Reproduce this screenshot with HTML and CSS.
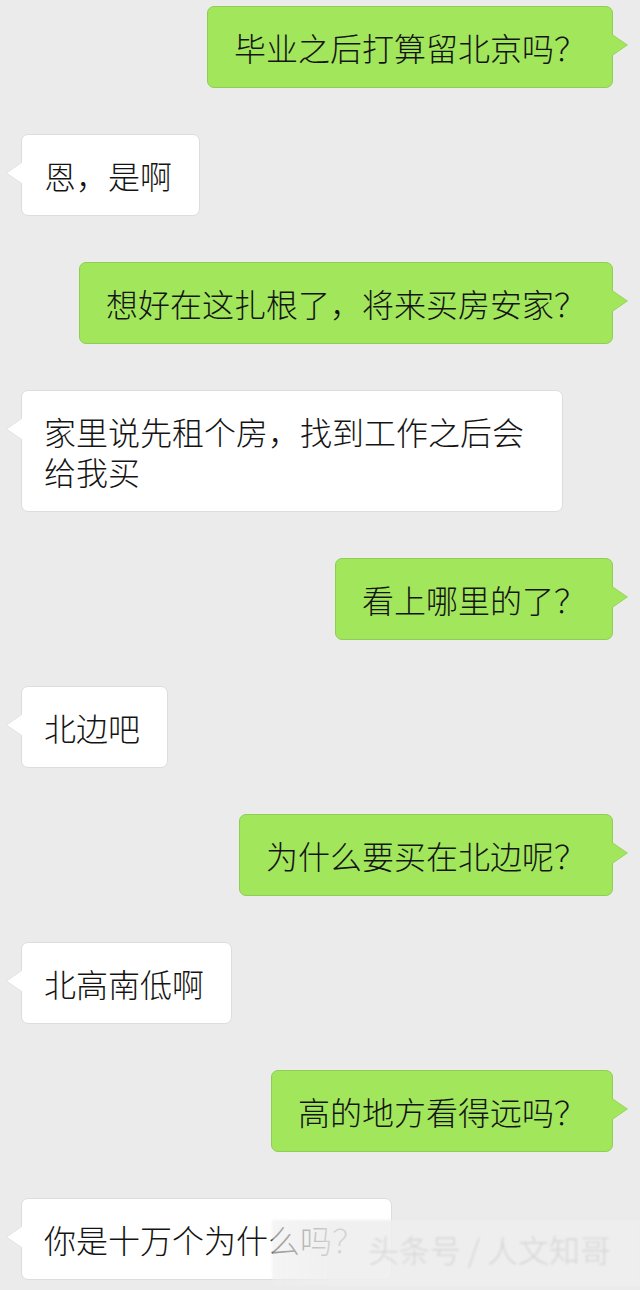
FILE: index.html
```html
<!DOCTYPE html>
<html lang="zh-CN">
<head>
<meta charset="utf-8">
<title>聊天记录</title>
<link rel="stylesheet" href="styles.css">
</head>
<body>
<main class="chat">
  <div class="row me"><div class="bubble green">毕业之后打算留北京吗？</div></div>
  <div class="row other"><div class="bubble white">恩，是啊</div></div>
  <div class="row me"><div class="bubble green">想好在这扎根了，将来买房安家？</div></div>
  <div class="row other"><div class="bubble white">家里说先租个房，找到工作之后会给我买</div></div>
  <div class="row me"><div class="bubble green">看上哪里的了？</div></div>
  <div class="row other"><div class="bubble white">北边吧</div></div>
  <div class="row me"><div class="bubble green">为什么要买在北边呢？</div></div>
  <div class="row other"><div class="bubble white">北高南低啊</div></div>
  <div class="row me"><div class="bubble green">高的地方看得远吗？</div></div>
  <div class="row other last">
    <div class="bubble white">你是十万个为什么吗？</div>
    <div class="watermark">头条号 / 人文知哥</div>
  </div>
</main>
</body>
</html>
```

FILE: styles.css
```css
html, body {
  margin: 0;
  padding: 0;
  background: #ebebeb;
}

body {
  width: 640px;
  height: 1290px;
  overflow: hidden;
  font-family: "Noto Sans CJK SC", "Noto Sans", sans-serif;
  font-weight: 300;
  color: #141414;
}

.chat {
  display: flex;
  flex-direction: column;
  gap: 46px;
  padding-top: 6px;
}

.row {
  display: flex;
  position: relative;
}

.row.me {
  justify-content: flex-end;
  padding-right: 27px;
}

.row.other {
  justify-content: flex-start;
  padding-left: 21px;
}

.bubble {
  position: relative;
  box-sizing: border-box;
  max-width: 542px;
  font-size: 32px;
  line-height: 40px;
  padding: 20px 26px;
  border-radius: 7px;
  border: 1px solid transparent;
}

.bubble.green {
  background: #a2e65c;
  border-color: #90cd55;
}

.bubble.white {
  background: #ffffff;
  border-color: #dddddd;
  padding-left: 22px;
  padding-right: 27px;
}

.bubble::before,
.bubble::after {
  content: "";
  position: absolute;
  width: 0;
  height: 0;
  border-top: 11px solid transparent;
  border-bottom: 11px solid transparent;
}

.bubble.green::before {
  left: 100%;
  top: 27px;
  border-left: 16px solid #90cd55;
}

.bubble.green::after {
  left: calc(100% - 1px);
  top: 27px;
  border-left: 16px solid #a2e65c;
}

.bubble.white::before {
  right: 100%;
  top: 27px;
  border-right: 16px solid #dddddd;
}

.bubble.white::after {
  right: calc(100% - 1px);
  top: 27px;
  border-right: 16px solid #ffffff;
}

.watermark {
  position: absolute;
  left: 272px;
  top: 22px;
  width: 368px;
  height: 66px;
  box-sizing: border-box;
  padding-left: 96px;
  background: linear-gradient(90deg, rgba(238, 238, 238, 0.6) 0px, rgba(238, 238, 238, 0.88) 60px);
  font-size: 31px;
  line-height: 58px;
  color: #d6d6d6;
  filter: blur(1.2px);
  white-space: nowrap;
  overflow: hidden;
}
```
